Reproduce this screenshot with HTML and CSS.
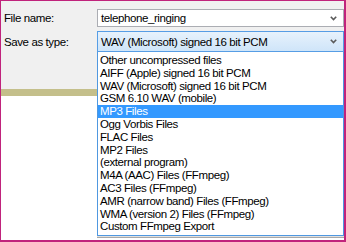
FILE: index.html
```html
<!DOCTYPE html>
<html lang="en">
<head>
  <meta charset="UTF-8" />
  <title>Export Audio</title>
  <link rel="stylesheet" href="styles.css">
</head>
<body>
  <div class="frame">
    <div class="panel">
      <div class="field">
        <label class="label">File name:</label>
        <div class="combo">
          <span class="value">telephone_ringing</span>
          <svg class="chev" width="7" height="5" viewBox="0 0 7 5"><polyline points="0.8,0.8 3.5,3.6 6.2,0.8" /></svg>
        </div>
      </div>
      <div class="field">
        <label class="label">Save as type:</label>
        <div class="combo open">
          <span class="value">WAV (Microsoft) signed 16 bit PCM</span>
          <svg class="chev" width="7" height="5" viewBox="0 0 7 5"><polyline points="0.8,0.8 3.5,3.6 6.2,0.8" /></svg>
        </div>
      </div>
    </div>
    <div class="rule"></div>
    <div class="below"></div>

    <!-- open list of the "Save as type" box -->
    <ul class="dropdown">
      <li>Other uncompressed files</li>
      <li>AIFF (Apple) signed 16 bit PCM</li>
      <li>WAV (Microsoft) signed 16 bit PCM</li>
      <li>GSM 6.10 WAV (mobile)</li>
      <li class="selected">MP3 Files</li>
      <li>Ogg Vorbis Files</li>
      <li>FLAC Files</li>
      <li>MP2 Files</li>
      <li>(external program)</li>
      <li>M4A (AAC) Files (FFmpeg)</li>
      <li>AC3 Files (FFmpeg)</li>
      <li>AMR (narrow band) Files (FFmpeg)</li>
      <li>WMA (version 2) Files (FFmpeg)</li>
      <li>Custom FFmpeg Export</li>
    </ul>
  </div>
</body>
</html>
```

FILE: styles.css
```css
body {
  margin: 0;
  font-family: 'Liberation Sans', Arial, sans-serif;
  font-size: 11.5px;
  letter-spacing: -0.4px;
  color: #000;
}

.frame {
  position: relative;
  width: 343px;
  height: 239px;
  border-style: solid;
  border-color: #c0237c;
  border-width: 1px 2px 2px 1px;
  display: flex;
  flex-direction: column;
  background-color: #fff;
}

.panel {
  height: 88px;
  background-color: #f0f0f0;
  padding: 8px 0 0 3px;
  box-sizing: border-box;
  display: flex;
  flex-direction: column;
  gap: 4px;
}

.field {
  display: flex;
  align-items: center;
}

.label {
  width: 93px;
}

.combo {
  flex: 1;
  height: 18px;
  box-sizing: border-box;
  border: 1px solid #abadb3;
  background-color: #fff;
  display: flex;
  align-items: center;
  padding-left: 3px;
}

.combo .value {
  flex: 1;
}

.combo.open {
  height: 21px;
  border-color: #569de5;
  background: linear-gradient(#e7f2fc, #cfe5f9);
}

.chev {
  margin-right: 6px;
  fill: none;
  stroke: #5a5a5a;
  stroke-width: 1.6;
}

.rule {
  height: 7px;
  background-color: #c4bf8b;
}

.below {
  flex: 1;
}

.dropdown {
  position: absolute;
  left: 96px;
  right: 0;
  top: 51px;
  margin: 0;
  padding: 2px 0 2px 0;
  list-style: none;
  background-color: #fff;
  border: 1px solid #4f98e0;
  border-top: none;
  box-shadow: 0 1px 0 #e0e0e0, 0 2px 0 #a9a9a9;
}

.dropdown li {
  height: 12.8px;
  line-height: 12.8px;
  padding-left: 2px;
  white-space: nowrap;
}

.dropdown li.selected {
  background-color: #3399ff;
  color: #fff;
}
```
